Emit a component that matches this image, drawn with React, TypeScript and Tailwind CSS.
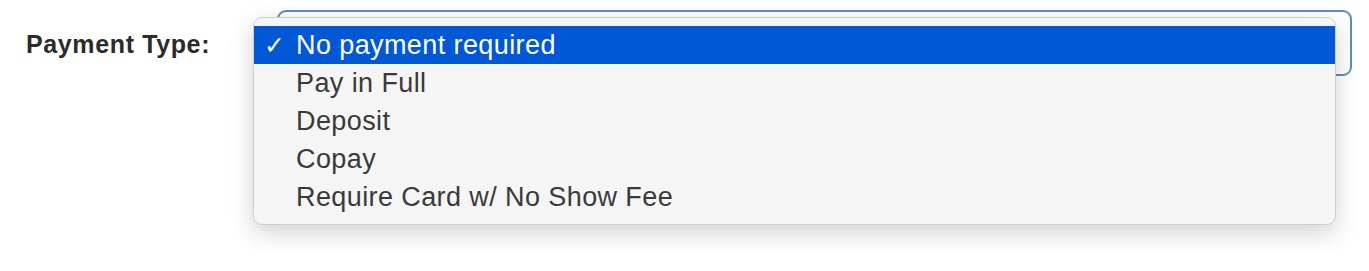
import React from "react";

const items = [
  "No payment required",
  "Pay in Full",
  "Deposit",
  "Copay",
  "Require Card w/ No Show Fee",
];

export default function App() {
  return (
    <div
      className="w-[1369px] h-[271px] bg-white relative"
      style={{ fontFamily: '"Liberation Sans", Arial, sans-serif' }}
    >
      <div className="flex items-start pt-[10px]">
        <div className="w-[277px] pl-[26px] h-[68px] flex items-center">
          <span className="text-[25px] font-bold text-[#2b2b2b] tracking-[0.025em] leading-none">
            Payment Type:
          </span>
        </div>
        <div className="relative w-[1075px] h-[66px] rounded-[9px] border-2 border-[#5f8cbc] bg-white">
          <div className="absolute left-[-26px] top-[5px] w-[1083px] h-[208px] rounded-[9px] bg-[#f5f5f5] border border-[#cfcfcf] shadow-[0_8px_24px_rgba(0,0,0,0.18)] pt-[8px] overflow-hidden">
            {items.map((t, i) => (
              <div
                key={t}
                className={
                  i === 0
                    ? "h-[38px] flex items-center bg-[#0058d5] text-white"
                    : "h-[38px] flex items-center text-[#3a3a3a]"
                }
              >
                <span className="w-[42px] pl-[10px] text-[25px] font-bold leading-none" style={{ fontFamily: '"DejaVu Sans", sans-serif' }}>
                  {i === 0 ? "✓" : ""}
                </span>
                <span className="text-[27px] leading-none tracking-[0.015em]">{t}</span>
              </div>
            ))}
          </div>
        </div>
      </div>
    </div>
  );
}
